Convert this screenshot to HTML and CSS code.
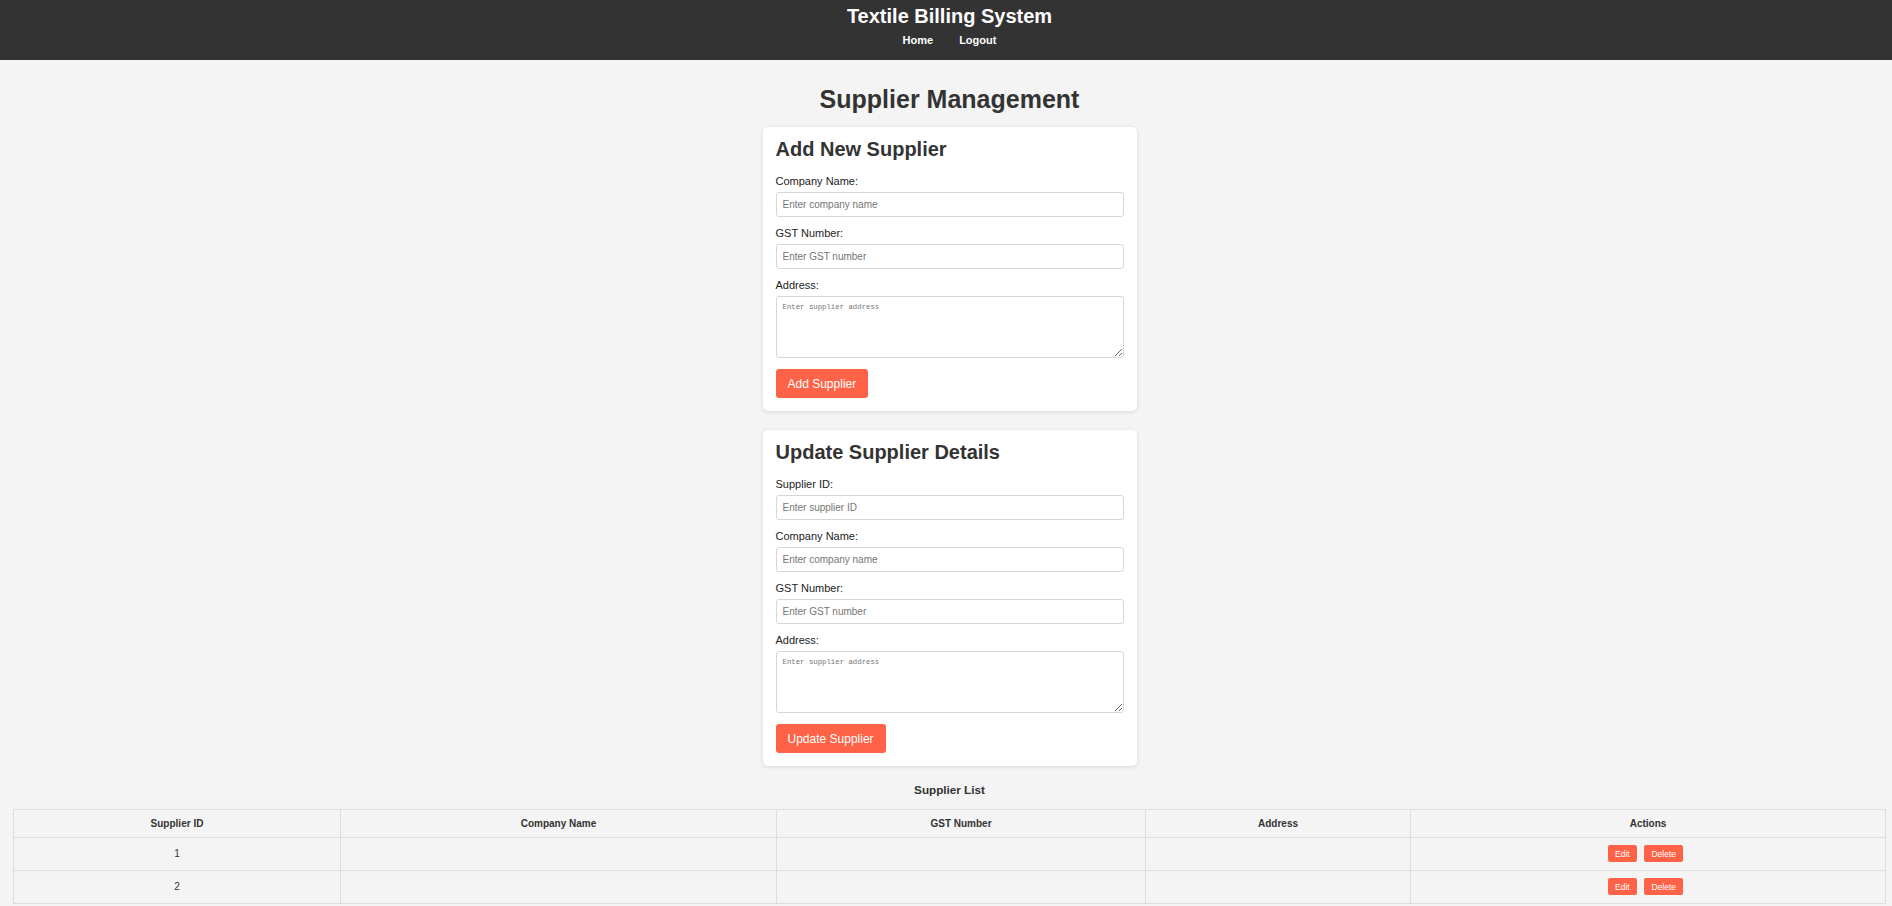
FILE: index.html
```html
<!DOCTYPE html>
<html lang="en">
<head>
<meta charset="utf-8">
<title>Supplier Management</title>
<link rel="stylesheet" href="styles.css">
</head>
<body>
<header class="topbar">
  <h1 class="brand">Textile Billing System</h1>
  <nav class="nav">
    <a href="#" class="nav-link">Home</a>
    <a href="#" class="nav-link">Logout</a>
  </nav>
</header>
<main class="page">
  <h1 class="page-title">Supplier Management</h1>

  <section class="card">
    <h2 class="card-title">Add New Supplier</h2>
    <form class="form">
      <label class="field-label">Company Name:</label>
      <input class="field-input" type="text" placeholder="Enter company name">
      <label class="field-label">GST Number:</label>
      <input class="field-input" type="text" placeholder="Enter GST number">
      <label class="field-label">Address:</label>
      <textarea class="field-area" placeholder="Enter supplier address"></textarea>
      <button type="button" class="btn">Add Supplier</button>
    </form>
  </section>

  <section class="card">
    <h2 class="card-title">Update Supplier Details</h2>
    <form class="form">
      <label class="field-label">Supplier ID:</label>
      <input class="field-input" type="text" placeholder="Enter supplier ID">
      <label class="field-label">Company Name:</label>
      <input class="field-input" type="text" placeholder="Enter company name">
      <label class="field-label">GST Number:</label>
      <input class="field-input" type="text" placeholder="Enter GST number">
      <label class="field-label">Address:</label>
      <textarea class="field-area" placeholder="Enter supplier address"></textarea>
      <button type="button" class="btn">Update Supplier</button>
    </form>
  </section>

  <h3 class="list-title">Supplier List</h3>
  <table class="list">
    <thead>
      <tr>
        <th class="col-id">Supplier ID</th>
        <th class="col-name">Company Name</th>
        <th class="col-gst">GST Number</th>
        <th class="col-addr">Address</th>
        <th class="col-act">Actions</th>
      </tr>
    </thead>
    <tbody>
      <tr>
        <td>1</td>
        <td></td>
        <td></td>
        <td></td>
        <td><button type="button" class="btn-sm">Edit</button> <button type="button" class="btn-sm">Delete</button></td>
      </tr>
      <tr>
        <td>2</td>
        <td></td>
        <td></td>
        <td></td>
        <td><button type="button" class="btn-sm">Edit</button> <button type="button" class="btn-sm">Delete</button></td>
      </tr>
    </tbody>
  </table>
</main>
</body>
</html>
```
FILE: styles.css
```css
* { box-sizing: border-box; }

body {
  margin: 0;
  background: #f4f4f4;
  font-family: "Liberation Sans", Arial, sans-serif;
  color: #333;
}

.topbar {
  background: #333;
  color: #fff;
  height: 60px;
  padding: 5px 6px 0 13px;
  text-align: center;
}

.brand {
  margin: 0;
  font-size: 20px;
  line-height: 23px;
  font-weight: bold;
}

.nav {
  margin-top: 5px;
  display: flex;
  justify-content: center;
}

.nav-link {
  color: #fff;
  text-decoration: none;
  font-size: 11px;
  font-weight: bold;
  line-height: 14px;
  margin: 0 13px;
}

.page {
  padding: 25px 6px 0 13px;
  display: flex;
  flex-direction: column;
  align-items: center;
}

.page-title {
  margin: 0 0 13px;
  font-size: 25px;
  line-height: 29px;
  font-weight: bold;
  color: #333;
}

.card {
  width: 374px;
  background: #fff;
  border-radius: 5px;
  box-shadow: 0 1px 4px rgba(0, 0, 0, 0.12);
  padding: 11px 13px 13px;
  margin-bottom: 19px;
}

.card-title {
  margin: 0 0 14px;
  font-size: 20px;
  line-height: 23px;
  font-weight: bold;
  color: #333;
}

.form {
  display: flex;
  flex-direction: column;
  align-items: flex-start;
}

.field-label {
  display: block;
  font-size: 11px;
  line-height: 13px;
  margin-bottom: 4px;
  color: #222;
}

.field-input {
  display: block;
  width: 100%;
  height: 25px;
  padding: 0 6px;
  margin: 0 0 10px;
  border: 1px solid #d6d6d6;
  border-radius: 3px;
  font-family: "Liberation Sans", Arial, sans-serif;
  font-size: 10px;
  color: #333;
  background: #fff;
}

.field-input::placeholder { color: #757575; }

.field-area {
  display: block;
  width: 100%;
  height: 62px;
  padding: 6px;
  margin: 0 0 11px;
  border: 1px solid #d6d6d6;
  border-radius: 3px;
  font-family: "Liberation Mono", "DejaVu Sans Mono", monospace;
  font-size: 7.33px;
  background: #fff;
  resize: both;
}

.field-area::placeholder { color: #757575; }

.btn {
  height: 29px;
  padding: 0 12px;
  border: none;
  border-radius: 3px;
  background: #ff6347;
  color: #fff;
  font-family: "Liberation Sans", Arial, sans-serif;
  font-size: 12px;
  cursor: pointer;
}

.list-title {
  margin: -1px 0 13px;
  font-size: 11.7px;
  line-height: 12px;
  font-weight: bold;
  color: #333;
}

.list {
  width: 100%;
  border-collapse: collapse;
  table-layout: fixed;
  font-size: 10px;
}

.list th,
.list td {
  border: 1px solid #ddd;
  padding: 7.5px 8px;
  text-align: center;
  line-height: 11.5px;
  color: #333;
  vertical-align: middle;
}

.list th { font-weight: bold; }

.col-id { width: 327px; }
.col-name { width: 436px; }
.col-gst { width: 369px; }
.col-addr { width: 265px; }

.btn-sm {
  display: inline-block;
  vertical-align: middle;
  height: 17px;
  padding: 0 7px;
  margin: 0 5px 0 0;
  border: none;
  border-radius: 2px;
  background: #ff6347;
  color: #fff;
  font-family: "Liberation Sans", Arial, sans-serif;
  font-size: 8.5px;
  cursor: pointer;
}
```
